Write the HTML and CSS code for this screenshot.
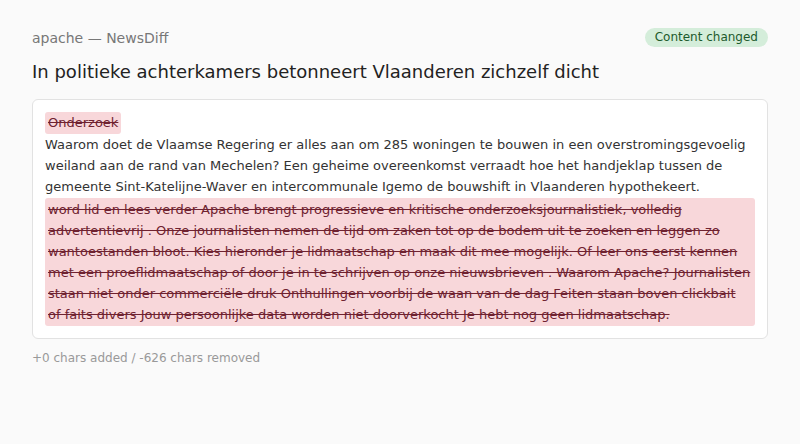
FILE: index.html
```html
<!DOCTYPE html>
<html lang="nl">
<head>
<meta charset="utf-8">
<title>apache — NewsDiff</title>
<link rel="stylesheet" href="styles.css">
</head>
<body>
<div class="page">
  <header class="topbar">
    <span class="source">apache — NewsDiff</span>
    <span class="badge">Content changed</span>
  </header>
  <h1 class="title">In politieke achterkamers betonneert Vlaanderen zichzelf dicht</h1>
  <div class="card">
    <div class="line"><del class="del-word">Onderzoek</del></div>
    <div class="para">Waarom doet de Vlaamse Regering er alles aan om 285 woningen te bouwen in een overstromingsgevoelig weiland aan de rand van Mechelen? Een geheime overeenkomst verraadt hoe het handjeklap tussen de gemeente Sint-Katelijne-Waver en intercommunale Igemo de bouwshift in Vlaanderen hypothekeert.</div>
    <del class="del-block">word lid en lees verder Apache brengt progressieve en kritische onderzoeksjournalistiek, volledig advertentievrij . Onze journalisten nemen de tijd om zaken tot op de bodem uit te zoeken en leggen zo wantoestanden bloot. Kies hieronder je lidmaatschap en maak dit mee mogelijk. Of leer ons eerst kennen met een proeflidmaatschap of door je in te schrijven op onze nieuwsbrieven . Waarom Apache? Journalisten staan niet onder commerciële druk Onthullingen voorbij de waan van de dag Feiten staan boven clickbait of faits divers Jouw persoonlijke data worden niet doorverkocht Je hebt nog geen lidmaatschap.</del>
  </div>
  <p class="stats">+0 chars added / -626 chars removed</p>
</div>
</body>
</html>
```
FILE: styles.css
```css
html, body {
  margin: 0;
  padding: 0;
  background: #fafafa;
}
body {
  font-family: "DejaVu Sans", "Noto Sans", sans-serif;
  color: #333;
}
.page {
  padding: 28px 32px;
}
.topbar {
  display: flex;
  justify-content: space-between;
  align-items: center;
  height: 19px;
  margin-bottom: 13px;
}
.source {
  font-size: 14px;
  color: #777;
}
.badge {
  font-size: 12px;
  line-height: 19px;
  padding: 0 10px;
  border-radius: 10px;
  background: #d4edda;
  color: #1d5a2c;
}
.title {
  margin: 0 0 15px;
  font-size: 18px;
  line-height: 24px;
  font-weight: normal;
  color: #222;
}
.card {
  background: #fff;
  border: 1px solid #e2e2e2;
  border-radius: 6px;
  padding: 12px;
  font-size: 13px;
  line-height: 21px;
}
.line {
  height: 22px;
  line-height: 22px;
}
.del-word {
  display: inline-block;
  vertical-align: top;
  padding: 0 3px;
  line-height: 22px;
  border-radius: 3px;
  background: #f8d7da;
  color: #6f2230;
}
.para {
  color: #333;
}
.del-block {
  display: block;
  margin-top: 1px;
  padding: 1px 3px;
  border-radius: 3px;
  background: #f8d7da;
  color: #6f2230;
}
.stats {
  margin: 10px 0 0;
  font-size: 12px;
  line-height: 18px;
  color: #999;
}
```
